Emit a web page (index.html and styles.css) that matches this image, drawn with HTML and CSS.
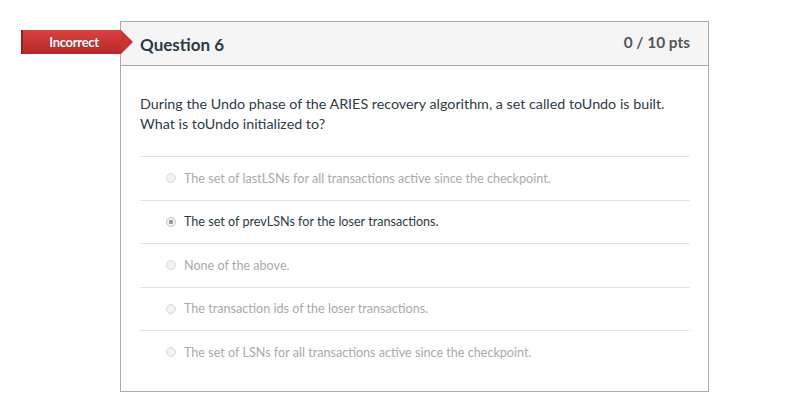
FILE: index.html
```html
<!DOCTYPE html>
<html>
<head>
<meta charset="utf-8">
<link rel="stylesheet" href="styles.css">
</head>
<body>
<div class="page">
  <div class="question">
    <div class="badge">Incorrect</div>
    <div class="header">
      <span class="title">Question 6</span>
      <span class="points">0 / 10 pts</span>
    </div>
    <div class="content">
      <p class="text">During the Undo phase of the ARIES recovery algorithm, a set called toUndo is built. What is toUndo initialized to?</p>
      <div class="answers">
        <div class="answer"><span class="radio"></span><span>The set of lastLSNs for all transactions active since the checkpoint.</span></div>
        <div class="answer selected"><span class="radio"></span><span>The set of prevLSNs for the loser transactions.</span></div>
        <div class="answer"><span class="radio"></span><span>None of the above.</span></div>
        <div class="answer"><span class="radio"></span><span>The transaction ids of the loser transactions.</span></div>
        <div class="answer"><span class="radio"></span><span>The set of LSNs for all transactions active since the checkpoint.</span></div>
      </div>
    </div>
  </div>
</div>
</body>
</html>
```
FILE: styles.css
```css
* { box-sizing: border-box; }
html, body { margin: 0; padding: 0; background: #fff; }
body { font-family: Lato, "Open Sans", sans-serif; color: #2d3b45; }
.page { padding: 21px 0 0 120px; }
.question {
  position: relative;
  width: 589px;
  height: 371px;
  border: 1px solid #aaaaaa;
}
.badge {
  position: absolute;
  left: -100px;
  top: 8px;
  width: 100px;
  height: 24px;
  background: linear-gradient(#db4242, #b52828);
  border-left: 2px solid #9e1c1c;
  color: #fff;
  font-weight: bold;
  font-size: 13px;
  line-height: 24px;
  text-align: center;
  padding-left: 4px;
  letter-spacing: -0.3px;
  text-shadow: 0 0 1px rgba(0,0,0,0.3);
}
.badge::after {
  content: "";
  position: absolute;
  right: -12px;
  top: 0;
  border-left: 12px solid #c83333;
  border-top: 12px solid transparent;
  border-bottom: 12px solid transparent;
}
.header {
  display: flex;
  justify-content: space-between;
  align-items: flex-start;
  height: 44px;
  background: #f5f5f5;
  border-bottom: 1px solid #aaaaaa;
  padding: 0 18px 0 19px;
}
.title {
  font-size: 17px;
  font-weight: bold;
  color: #2d3b45;
  line-height: 20px;
  margin-top: 13px;
}
.points {
  font-size: 15.4px;
  font-weight: bold;
  color: #555555;
  line-height: 18px;
  margin-top: 11px;
}
.content { padding: 28px 18px 0 19px; }
.text {
  margin: 0;
  font-size: 14.3px;
  line-height: 20px;
  color: #2d3b45;
}
.answers { margin-top: 22px; }
.answer {
  display: flex;
  align-items: center;
  height: 43.5px;
  border-top: 1px solid #e5e5e5;
  padding-left: 26px;
  font-size: 12.6px;
  color: #aaaaaa;
}
.answer.selected { color: #2d3b45; }
.radio {
  width: 10px;
  height: 10px;
  border-radius: 50%;
  border: 1px solid #d8d8d8;
  background: #f3f3f3;
  margin-right: 8px;
  flex: none;
}
.answer.selected .radio {
  background: radial-gradient(circle, #999 0 2px, #f3f3f3 2.5px);
  border-color: #c4c4c4;
}
```
